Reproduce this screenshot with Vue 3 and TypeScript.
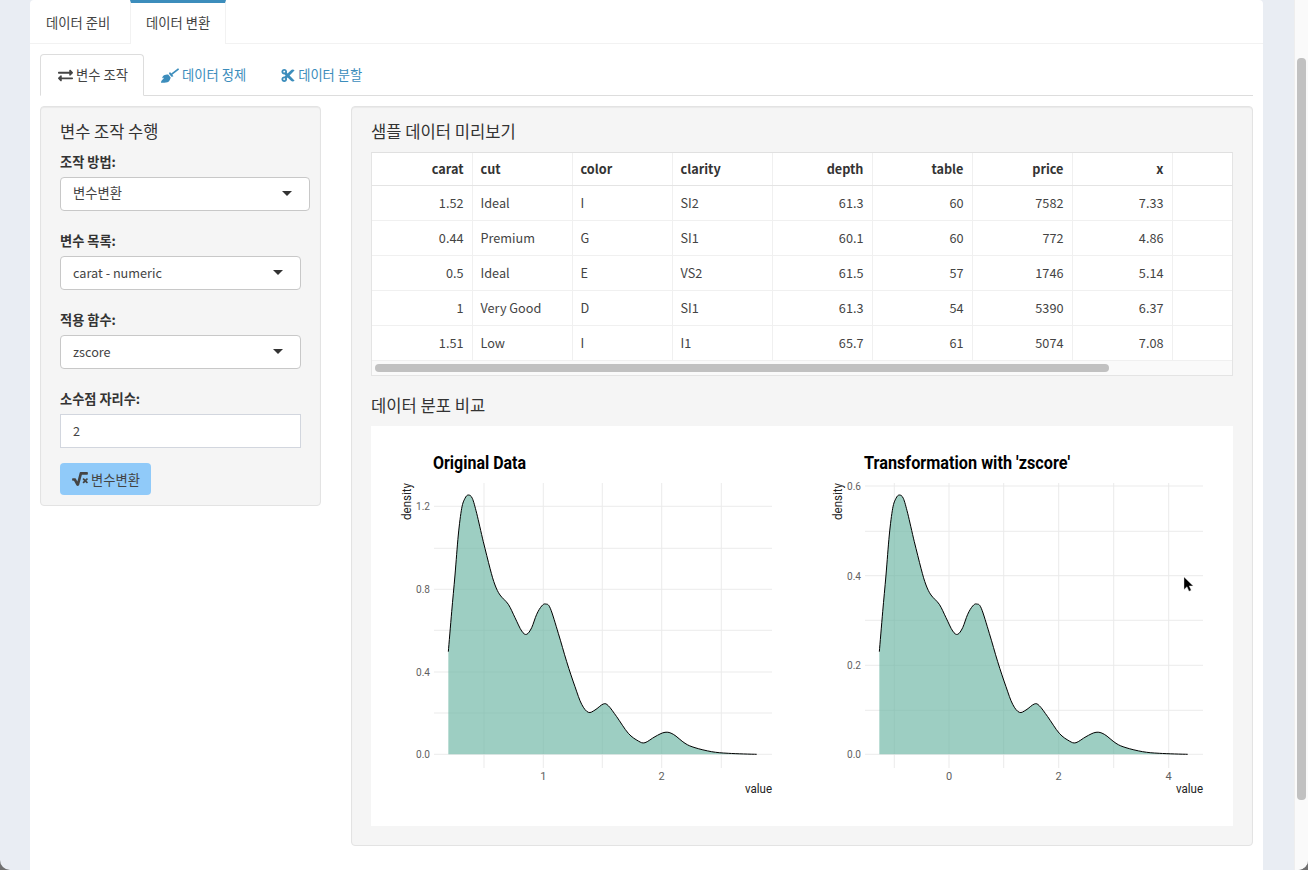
<script setup lang="ts">
interface Diamond {
  carat: string
  cut: string
  color: string
  clarity: string
  depth: string
  table: string
  price: string
  x: string
}

interface Axis {
  title: string
  titleWidth: number
  majorY: { y: number; label: string }[]
  minorY: number[]
  majorX: { x: number; label: string }[]
  minorX: number[]
  panelLeft: number
  panelRight: number
}

const columns: { key: keyof Diamond; num: boolean }[] = [
  { key: 'carat', num: true },
  { key: 'cut', num: false },
  { key: 'color', num: false },
  { key: 'clarity', num: false },
  { key: 'depth', num: true },
  { key: 'table', num: true },
  { key: 'price', num: true },
  { key: 'x', num: true },
]

const rows: Diamond[] = [
  { carat: '1.52', cut: 'Ideal', color: 'I', clarity: 'SI2', depth: '61.3', table: '60', price: '7582', x: '7.33' },
  { carat: '0.44', cut: 'Premium', color: 'G', clarity: 'SI1', depth: '60.1', table: '60', price: '772', x: '4.86' },
  { carat: '0.5', cut: 'Ideal', color: 'E', clarity: 'VS2', depth: '61.5', table: '57', price: '1746', x: '5.14' },
  { carat: '1', cut: 'Very Good', color: 'D', clarity: 'SI1', depth: '61.3', table: '54', price: '5390', x: '6.37' },
  { carat: '1.51', cut: 'Low', color: 'I', clarity: 'I1', depth: '65.7', table: '61', price: '5074', x: '7.08' },
]

// curve traced from the reference crop (3x, origin 395,445)
const raw: [number, number][] = [
  [160, 620], [170, 500], [180, 390], [190, 270], [200, 190], [210, 160], [220, 150], [232, 160],
  [245, 205], [265, 290], [285, 370], [300, 420], [315, 450], [340, 478], [360, 518], [380, 558],
  [395, 568], [410, 548], [425, 508], [440, 483], [452, 477], [466, 490], [490, 565], [515, 650],
  [540, 725], [560, 778], [580, 802], [600, 795], [625, 777], [640, 782], [665, 815], [700, 865],
  [730, 888], [750, 893], [780, 875], [810, 862], [835, 868], [870, 895], [900, 908], [950, 920],
  [1000, 925], [1085, 928],
]
const pts = raw.map(([x, y]) => [395 + x / 3 - 371, 445 + y / 3 - 426])

function smooth(dx: number): string {
  let d = `M${pts[0][0] + dx} ${pts[0][1]}`
  for (let i = 0; i < pts.length - 1; i++) {
    const p0 = pts[Math.max(0, i - 1)]
    const p1 = pts[i]
    const p2 = pts[i + 1]
    const p3 = pts[Math.min(pts.length - 1, i + 2)]
    const c1x = p1[0] + (p2[0] - p0[0]) / 6 + dx
    const c1y = p1[1] + (p2[1] - p0[1]) / 6
    const c2x = p2[0] - (p3[0] - p1[0]) / 6 + dx
    const c2y = p2[1] - (p3[1] - p1[1]) / 6
    d += `C${c1x.toFixed(1)} ${c1y.toFixed(1)} ${c2x.toFixed(1)} ${c2y.toFixed(1)} ${(p2[0] + dx).toFixed(1)} ${p2[1].toFixed(1)}`
  }
  return d
}

const baseY = 328.3
const plots: (Axis & { line: string; area: string })[] = [
  {
    title: 'Original Data',
    titleWidth: 93,
    majorY: [
      { y: 80.3, label: '1.2' },
      { y: 163.3, label: '0.8' },
      { y: 246, label: '0.4' },
      { y: 328.3, label: '0.0' },
    ],
    minorY: [122.3, 204.3, 287],
    majorX: [
      { x: 172.3, label: '1' },
      { x: 290.7, label: '2' },
    ],
    minorX: [113, 231.3, 350.3],
    panelLeft: 63,
    panelRight: 401,
    line: smooth(0),
    area: `${smooth(0)}L${pts[pts.length - 1][0]} ${baseY}L${pts[0][0]} ${baseY}Z`,
  },
  {
    title: "Transformation with 'zscore'",
    titleWidth: 206,
    majorY: [
      { y: 60, label: '0.6' },
      { y: 149.7, label: '0.4' },
      { y: 239.3, label: '0.2' },
      { y: 328.3, label: '0.0' },
    ],
    minorY: [105.3, 194.3, 284.3],
    majorX: [
      { x: 578, label: '0' },
      { x: 687.7, label: '2' },
      { x: 797.7, label: '4' },
    ],
    minorX: [523.3, 632.7, 742.7],
    panelLeft: 494,
    panelRight: 832,
    line: smooth(431),
    area: `${smooth(431)}L${pts[pts.length - 1][0] + 431} ${baseY}L${pts[0][0] + 431} ${baseY}Z`,
  },
]
</script>

<template>
  <div class="window">
    <div class="page">
      <div class="top-tabs">
        <div class="top-tab">데이터 준비</div>
        <div class="top-tab active">데이터 변환</div>
      </div>

      <div class="content">
        <div class="sub-tabs">
          <div class="sub-tab active">
            <svg class="icon" viewBox="0 0 512 512">
              <path d="M0 168v-16c0-13.255 10.745-24 24-24h360V80c0-21.367 25.899-32.042 40.971-16.971l80 80c9.372 9.373 9.372 24.569 0 33.941l-80 80C409.956 271.982 384 261.456 384 240v-48H24c-13.255 0-24-10.745-24-24zm488 152H128v-48c0-21.314-25.862-32.08-40.971-16.971l-80 80c-9.372 9.373-9.372 24.569 0 33.941l80 80C102.057 463.997 128 453.437 128 432v-48h360c13.255 0 24-10.745 24-24v-16c0-13.255-10.745-24-24-24z" />
            </svg>
            변수 조작
          </div>
          <div class="sub-tab second">
            <svg class="icon broom" viewBox="0 0 640 512">
              <path d="M256.47 216.77l86.73 109.18s-16.6 102.36-76.57 150.12C206.66 523.85 0 510.19 0 510.19s3.8-23.14 11-55.43l94.62-112.17c3.97-4.7-.87-11.62-6.65-9.5l-60.4 22.09c14.44-41.66 32.72-80.04 54.6-97.47 59.97-47.76 163.3-40.94 163.3-40.94zM636.53 31.03l-19.86-25c-5.49-6.9-15.52-8.05-22.41-2.56l-232.48 177.8-34.14-42.97c-5.09-6.41-15.14-5.21-18.59 2.21l-25.33 54.55 86.73 109.18 58.8-12.45c8-1.69 11.42-11.2 6.34-17.6l-34.15-42.97 232.48-177.8c6.89-5.48 8.04-15.53 2.56-22.42z" />
            </svg>
            데이터 정제
          </div>
          <div class="sub-tab">
            <svg class="icon cut" viewBox="0 0 448 512">
              <path d="M278.06 256L444.48 89.57c4.69-4.69 4.69-12.29 0-16.97-32.8-32.8-85.99-32.8-118.79 0L210.18 188.12l-24.86-24.86c4.31-10.92 6.68-22.81 6.68-35.26 0-53.02-42.98-96-96-96S0 74.98 0 128s42.98 96 96 96c4.54 0 8.99-.32 13.36-.93L142.29 256l-32.93 32.93c-4.37-.61-8.83-.93-13.36-.93-53.02 0-96 42.98-96 96s42.98 96 96 96 96-42.98 96-96c0-12.45-2.37-24.34-6.68-35.26l24.86-24.86L325.69 439.4c32.8 32.8 85.99 32.8 118.79 0 4.69-4.68 4.69-12.28 0-16.97L278.06 256zM96 160c-17.64 0-32-14.36-32-32s14.36-32 32-32 32 14.36 32 32-14.36 32-32 32zm0 256c-17.64 0-32-14.36-32-32s14.36-32 32-32 32 14.36 32 32-14.36 32-32 32z" />
            </svg>
            데이터 분할
          </div>
        </div>

        <div class="columns">
          <aside class="well side">
            <h4 class="side-title">변수 조작 수행</h4>

            <label class="field-label">조작 방법:</label>
            <div class="select wide">변수변환<i class="caret" /></div>

            <label class="field-label">변수 목록:</label>
            <div class="select latin">carat - numeric<i class="caret" /></div>

            <label class="field-label">적용 함수:</label>
            <div class="select latin">zscore<i class="caret" /></div>

            <label class="field-label">소수점 자리수:</label>
            <div class="number">2</div>

            <button class="run" type="button">
              <svg class="sqrt" viewBox="0 0 576 512">
                <path d="M571.31 251.31l-22.62-22.62c-6.25-6.25-16.38-6.25-22.63 0L480 274.75l-46.06-46.06c-6.25-6.25-16.38-6.25-22.63 0l-22.62 22.62c-6.25 6.25-6.25 16.38 0 22.63L434.75 320l-46.06 46.06c-6.25 6.25-6.25 16.38 0 22.63l22.62 22.62c6.25 6.25 16.38 6.25 22.63 0L480 365.25l46.06 46.06c6.25 6.25 16.38 6.25 22.63 0l22.62-22.62c6.25-6.25 6.25-16.38 0-22.63L525.25 320l46.06-46.06c6.25-6.25 6.25-16.38 0-22.63zM552 0H307.65c-14.54 0-27.26 9.8-30.95 23.87l-84.79 322.8-58.41-106.1A32.008 32.008 0 0 0 105.47 224H24c-13.25 0-24 10.74-24 24v48c0 13.25 10.75 24 24 24h43.62l88.88 163.73C168.99 503.5 186.3 512 204.94 512c17.27 0 44.44-9 54.28-41.48L357.03 96H552c13.25 0 24-10.75 24-24V24c0-13.26-10.75-24-24-24z" />
              </svg>
              변수변환
            </button>
          </aside>

          <section class="well main">
            <h4 class="main-title">샘플 데이터 미리보기</h4>

            <div class="table-box">
              <table>
                <thead>
                  <tr>
                    <th v-for="c in columns" :key="c.key" :class="{ num: c.num }">{{ c.key }}</th>
                    <th class="rest" />
                  </tr>
                </thead>
                <tbody>
                  <tr v-for="(row, i) in rows" :key="i">
                    <td v-for="c in columns" :key="c.key" :class="{ num: c.num }">{{ row[c.key] }}</td>
                    <td class="rest" />
                  </tr>
                </tbody>
              </table>
              <div class="h-scroll"><div class="h-thumb" /></div>
            </div>

            <h4 class="main-title second">데이터 분포 비교</h4>

            <div class="plot-box">
              <svg class="plot" viewBox="0 0 862 400" width="862" height="400">
                <g v-for="p in plots" :key="p.title">
                  <g class="grid">
                    <line v-for="y in p.minorY" :key="y" :x1="p.panelLeft" :x2="p.panelRight" :y1="y" :y2="y" />
                    <line v-for="t in p.majorY" :key="t.label" :x1="p.panelLeft" :x2="p.panelRight" :y1="t.y" :y2="t.y" />
                    <line v-for="x in p.minorX" :key="x" :x1="x" :x2="x" y1="57" y2="342" />
                    <line v-for="t in p.majorX" :key="t.label" :x1="t.x" :x2="t.x" y1="57" y2="342" />
                  </g>
                  <path class="area" :d="p.area" />
                  <path class="curve" :d="p.line" />
                  <text class="plot-title" :x="p.panelLeft - 1" y="43" :textLength="p.titleWidth" lengthAdjust="spacingAndGlyphs">{{ p.title }}</text>
                  <text class="tick" v-for="t in p.majorY" :key="t.label" :x="p.panelLeft - 18" :y="t.y + 4" textLength="14" lengthAdjust="spacingAndGlyphs">{{ t.label }}</text>
                  <text class="tick" v-for="t in p.majorX" :key="t.label" :x="t.x" y="353.5" text-anchor="middle">{{ t.label }}</text>
                  <text class="axis" :x="p.panelRight - 27" y="367" textLength="27" lengthAdjust="spacingAndGlyphs">value</text>
                  <text class="axis" textLength="37" lengthAdjust="spacingAndGlyphs" :transform="`translate(${p.panelLeft - 23} 94) rotate(-90)`">density</text>
                </g>
              </svg>
            </div>
          </section>
        </div>
      </div>
    </div>

    <div class="v-scroll"><div class="v-thumb" /></div>

    <svg class="cursor" viewBox="0 0 12 17" width="12" height="17">
      <path d="M1 1v12.5l3-2.8 2 4.6 2.2-1-2-4.4h4z" fill="#000" stroke="#ddd" stroke-width=".4" />
    </svg>
  </div>
</template>

<style scoped>
.window {
  position: relative;
  height: 870px;
  overflow: hidden;
  background: #e9edf3;
  border-radius: 0 0 10px 10px;
  padding: 0 45px 0 30px;
  box-sizing: border-box;
  font-family: "Noto Sans CJK KR", "Noto Sans", sans-serif;
  font-size: 13.3px;
  color: #333;
}

.page {
  height: 870px;
  background: #fff;
  border-radius: 4px 4px 0 0;
}

.top-tabs {
  display: flex;
  height: 44px;
  box-sizing: border-box;
  border-bottom: 1px solid #f2f2f2;
  white-space: nowrap;
}

.top-tab {
  padding: 13px 16px 0;
  width: 100px;
  box-sizing: border-box;
  line-height: 20px;
  color: #444;
}

.top-tab.active {
  width: 96px;
  height: 44px;
  border-top: 3px solid #3c8dbc;
  border-left: 1px solid #f2f2f2;
  border-right: 1px solid #f2f2f2;
  background: #fff;
  padding: 10px 15px 0;
}

.content {
  padding: 10px 10px 0;
}

.sub-tabs {
  display: flex;
  height: 42px;
  box-sizing: border-box;
  border-bottom: 1px solid #ddd;
  white-space: nowrap;
}

.sub-tab {
  display: flex;
  align-items: center;
  gap: 3px;
  height: 42px;
  padding: 0 16px 0 17px;
  box-sizing: border-box;
  color: #3c8dbc;
  fill: #3c8dbc;
  line-height: 20px;
}

.sub-tab.second {
  padding-right: 18px;
}

.sub-tab.active {
  color: #444;
  fill: #444;
  background: #fff;
  border: 1px solid #ddd;
  border-bottom-color: #fff;
  border-radius: 4px 4px 0 0;
  width: 104px;
}

.icon {
  width: 15px;
  height: 15px;
  flex: none;
}

.icon.broom {
  width: 18px;
}

.icon.cut {
  width: 14px;
}

.columns {
  display: flex;
  align-items: flex-start;
  gap: 30px;
  margin-top: 10px;
}

.well {
  background: #f5f5f5;
  border: 1px solid #e3e3e3;
  border-radius: 4px;
  box-sizing: border-box;
  box-shadow: inset 0 1px 1px rgba(0, 0, 0, 0.05);
}

.side {
  width: 281px;
  height: 400px;
  padding: 14px 19px 0;
}

.side-title {
  margin: 0 0 11px;
  font-size: 16.5px;
  font-weight: 400;
  line-height: 20px;
  color: #333;
}

.field-label {
  display: block;
  margin-bottom: 6px;
  font-size: 13.2px;
  font-weight: 700;
  line-height: 19px;
  color: #333;
}

.select {
  position: relative;
  width: 241px;
  height: 34px;
  margin-bottom: 20px;
  padding: 0 12px;
  box-sizing: border-box;
  background: #fff;
  border: 1px solid #c8c8c8;
  border-radius: 4px;
  line-height: 30px;
  color: #444;
}

.select.latin {
  font-size: 12.7px;
  line-height: 31px;
}

.select.wide {
  width: 250px;
}

.caret {
  position: absolute;
  right: 17px;
  top: 13px;
  border-top: 5px solid #333;
  border-left: 5px solid transparent;
  border-right: 5px solid transparent;
}

.number {
  width: 241px;
  height: 34px;
  margin-bottom: 15px;
  padding: 0 12px;
  box-sizing: border-box;
  background: #fff;
  border: 1px solid #d2d6de;
  font-size: 12.7px;
  line-height: 32px;
  color: #444;
}

.run {
  display: flex;
  align-items: center;
  gap: 3px;
  width: 91px;
  height: 32px;
  padding: 0 0 0 12px;
  border: 0;
  border-radius: 4px;
  background: #90caf9;
  font: inherit;
  color: #444;
}

.sqrt {
  width: 16px;
  height: 14px;
  fill: #444;
}

.main {
  width: 902px;
  height: 740px;
  padding: 14px 19px 0;
}

.main-title {
  margin: 0 0 11px;
  font-size: 16.6px;
  font-weight: 400;
  line-height: 20px;
  color: #333;
}

.main-title.second {
  margin-top: 19px;
}

.table-box {
  width: 862px;
  box-sizing: border-box;
  background: #fff;
  border: 1px solid #e4e4e4;
  border-top-color: #e0e0e0;
}

table {
  border-collapse: collapse;
  table-layout: fixed;
  width: 860px;
}

th,
td {
  width: 100px;
  box-sizing: border-box;
  padding: 0 8px;
  text-align: left;
  border-right: 1px solid #f0f0f0;
  font-size: 12.7px;
  line-height: 20px;
}

th {
  height: 32px;
  border-bottom: 1px solid #e4e4e4;
  font-weight: 700;
  color: #333;
}

td {
  height: 35px;
  border-bottom: 1px solid #f0f0f0;
  color: #444;
}

th.num,
td.num {
  text-align: right;
}

.rest {
  width: 60px;
  border-right: 0;
}

.h-scroll {
  height: 14px;
  padding: 3px 3px 0;
  box-sizing: border-box;
  background: #fafafa;
}

.h-thumb {
  width: 734px;
  height: 8px;
  border-radius: 4px;
  background: #c1c1c1;
}

.plot-box {
  width: 862px;
  height: 400px;
  background: #fff;
}

.plot {
  display: block;
}

.grid line {
  stroke: #ebebeb;
  stroke-width: 1;
}

.area {
  fill: #69b3a2;
  fill-opacity: 0.65;
}

.curve {
  fill: none;
  stroke: #000;
  stroke-width: 1;
}

.plot-title {
  font-family: Roboto, sans-serif;
  font-size: 18px;
  font-weight: 700;
  fill: #000;
}

.tick {
  font-family: Roboto, sans-serif;
  font-size: 11px;
  fill: #5f5f5f;
}

.axis {
  font-family: Roboto, sans-serif;
  font-size: 12.5px;
  fill: #222;
}

.v-scroll {
  position: absolute;
  top: 0;
  right: 0;
  bottom: 0;
  width: 14px;
  background: #fafafa;
  border-left: 1px solid #eee;
  box-sizing: border-box;
}

.v-thumb {
  margin: 58px 0 0 2px;
  width: 9px;
  height: 742px;
  border-radius: 4px;
  background: #c1c1c1;
}

.cursor {
  position: absolute;
  left: 1183px;
  top: 576px;
}
</style>

<style>
body {
  background: #707070;
}
</style>
